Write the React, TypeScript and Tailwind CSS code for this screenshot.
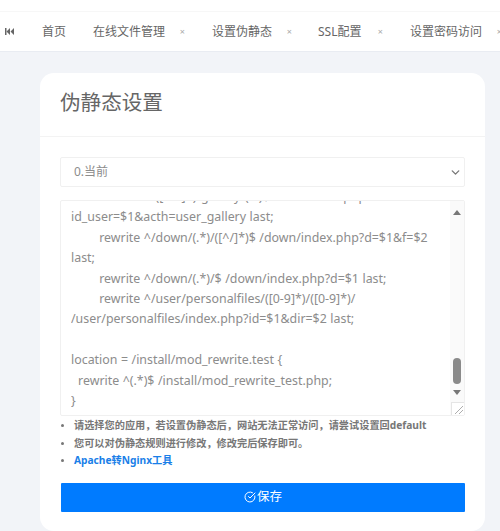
import React from "react";
import { ChevronDown, CircleCheckBig } from "lucide-react";

const font = { fontFamily: '"Noto Sans", "Noto Sans CJK SC", sans-serif' };

const tabs = [
  { name: "在线文件管理", w: "w-[119px]", pl: "pl-[14px]" },
  { name: "设置伪静态", w: "w-[107px]", pl: "pl-[14px]", active: true },
  { name: "SSL配置", w: "w-[91px]", pl: "pl-[13px]" },
  { name: "设置密码访问", w: "w-[119px]", pl: "pl-[14px]" },
];

const lines = [
  "        rewrite ^/([0-9]+)/gallery/(.*)$ /user/index.php?",
  "id_user=$1&acth=user_gallery last;",
  "        rewrite ^/down/(.*)/([^/]*)$ /down/index.php?d=$1&f=$2",
  "last;",
  "        rewrite ^/down/(.*)/$ /down/index.php?d=$1 last;",
  "        rewrite ^/user/personalfiles/([0-9]*)/([0-9]*)/",
  "/user/personalfiles/index.php?id=$1&dir=$2 last;",
  " ",
  "location = /install/mod_rewrite.test {",
  "  rewrite ^(.*)$ /install/mod_rewrite_test.php;",
  "}",
];

const App: React.FC = () => {
  return (
    <div style={font} className="w-[500px] h-[531px] overflow-hidden bg-[#f2f4f8] flex flex-col">
      {/* Top bar */}
      <div className="h-[12px] bg-white border-b border-[#f7f7f7] shrink-0" />

      {/* Tabs */}
      <div className="h-[40px] bg-white flex items-stretch border-b border-[#e9ecf2] shrink-0 overflow-hidden text-[12px] text-[#666]">
        <div className="w-[25px] flex items-center pl-[5px] shrink-0">
          <svg width="9" height="7" viewBox="0 0 9 7" fill="#666">
            <rect x="0" y="0" width="1.5" height="7" />
            <path d="M5 0v7L1.5 3.5zM9 0v7L5.5 3.5z" />
          </svg>
        </div>
        <div className="w-[54px] shrink-0 flex items-center pl-[17px]">首页</div>
        {tabs.map((t) => (
          <div
            key={t.name}
            className={`${t.w} ${t.pl} shrink-0 flex items-center justify-between pr-[13px] -mb-px border-b ${
              t.active ? "border-[#4a90c2]" : "border-transparent"
            }`}
          >
            <span className="whitespace-nowrap">{t.name}</span>
            <span className="text-[9px] text-[#aaa]">×</span>
          </div>
        ))}
      </div>

      {/* Card */}
      <div className="mt-[21px] ml-[40px] w-[445px] bg-white rounded-[14px] flex-1 flex flex-col">
        <div className="h-[64px] border-b border-[#f3f3f3] flex items-center pl-[20px] shrink-0">
          <h1 className="text-[20.6px] text-[#666] font-normal mt-[-4px]">伪静态设置</h1>
        </div>

        <div className="px-[20px] pt-[20px]">
          {/* Select */}
          <div className="h-[30px] border border-[#f0f0f0] rounded-[2px] flex items-center justify-between pl-[13px] pr-[2px] text-[12px] text-[#8c8c8c]">
            <span>0.当前</span>
            <ChevronDown size={13} strokeWidth={2.5} color="#777" />
          </div>

          {/* Textarea */}
          <div className="relative mt-[13px] h-[216px] border border-[#f0f0f0] rounded-[2px] overflow-hidden">
            <div className="-mt-[14px] pl-[10px] pr-[22px] text-[12.4px] [word-spacing:0.3px] leading-[20.4px] text-[#8c8c8c]">
              {lines.map((l, i) => (
                <div key={i} className="whitespace-pre overflow-hidden">
                  {l}
                </div>
              ))}
            </div>
            {/* Scrollbar */}
            <div className="absolute top-0 right-0 bottom-0 w-[14px] bg-[#fafafa] flex flex-col items-center">
              <svg width="8" height="5" viewBox="0 0 8 5" fill="#777" className="mt-[9px]">
                <path d="M0 5L4 0l4 5z" />
              </svg>
              <div className="w-[8px] h-[26px] rounded-[4px] bg-[#8a8a8a] mt-[143px]" />
              <svg width="8" height="5" viewBox="0 0 8 5" fill="#777" className="mt-[6px]">
                <path d="M0 0l4 5 4-5z" />
              </svg>
            </div>
            {/* Resize handle */}
            <div className="absolute right-0 bottom-0 w-[13px] h-[13px] bg-white border-t border-l border-[#e5e5e5]">
              <svg width="12" height="12" viewBox="0 0 12 12" stroke="#999" strokeWidth="0.8">
                <path d="M3 11l8-8M7 11l4-4" />
              </svg>
            </div>
          </div>

          {/* Tips */}
          <ul className="mt-[1px] text-[10.2px] font-bold text-[#777] leading-[17.5px]">
            <li className="flex items-center">
              <span className="w-[3px] h-[3px] rounded-full bg-[#777] ml-[1px] mr-[10px]" />
              请选择您的应用，若设置伪静态后，网站无法正常访问，请尝试设置回default
            </li>
            <li className="flex items-center">
              <span className="w-[3px] h-[3px] rounded-full bg-[#777] ml-[1px] mr-[10px]" />
              您可以对伪静态规则进行修改，修改完后保存即可。
            </li>
            <li className="flex items-center">
              <span className="w-[3px] h-[3px] rounded-full bg-[#777] ml-[1px] mr-[10px]" />
              <a className="text-[#1a7fe8]">Apache转Nginx工具</a>
            </li>
          </ul>

          {/* Save */}
          <button className="mt-[13px] ml-px w-[404px] h-[29px] bg-[#007bff] rounded-[1px] text-white text-[12.5px] flex items-center justify-center gap-[1px]">
            <CircleCheckBig size={12} strokeWidth={2} />
            保存
          </button>
        </div>
      </div>
    </div>
  );
};

export default App;
